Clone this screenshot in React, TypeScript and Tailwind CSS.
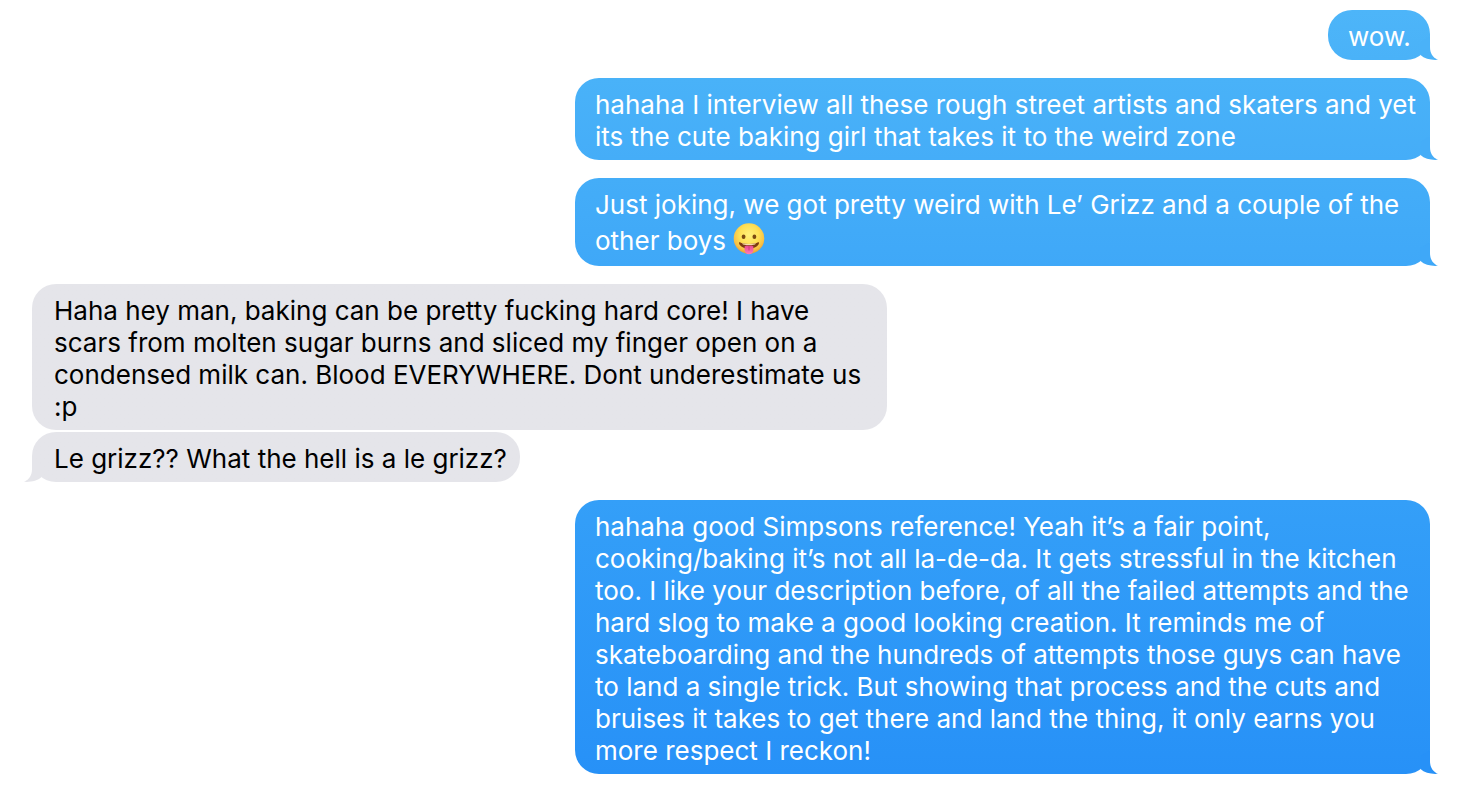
import type { ReactNode } from "react";
import clsx from "clsx";

type Message = {
  id: number;
  sent: boolean;
  body: ReactNode;
  color: string;
  tail?: string;
  spacing: string;
};

function TongueEmoji() {
  return (
    <svg
      role="img"
      aria-label="face with tongue"
      viewBox="0 0 32 38"
      className="inline-block h-[38px] w-8 align-[-9px]"
    >
      <defs>
        <radialGradient id="face" cx="0.5" cy="0.38" r="0.64">
          <stop offset="0" stopColor="#fff07a" />
          <stop offset="0.5" stopColor="#fee055" />
          <stop offset="0.8" stopColor="#f9c044" />
          <stop offset="1" stopColor="#e8952e" />
        </radialGradient>
        <linearGradient id="tongue" x1="0" y1="0" x2="0" y2="1">
          <stop offset="0" stopColor="#e8488c" />
          <stop offset="1" stopColor="#ff7dbb" />
        </linearGradient>
      </defs>
      <circle cx="16" cy="17.5" r="15.3" fill="url(#face)" />
      <ellipse cx="10.6" cy="15.8" rx="1.9" ry="2.3" fill="#7a4a12" />
      <ellipse cx="21.4" cy="15.8" rx="1.9" ry="2.3" fill="#7a4a12" />
      <path
        d="M6 21.6 C6.6 20.8 7.6 21.6 8.4 21.9 C13.2 23.2 18.8 23.2 23.6 21.9 C24.4 21.6 25.4 20.8 26 21.6 C26.2 24.6 21.8 27.8 16 27.8 C10.2 27.8 5.8 24.6 6 21.6 Z"
        fill="#7c3b10"
      />
      <path
        d="M9 22.3 C13.2 23.3 18.8 23.3 23 22.3 L22 23.6 C18.4 24.6 13.6 24.6 10 23.6 Z"
        fill="#f7dcae"
      />
      <path
        d="M11.6 25.4 C12.9 24.1 14.7 24.3 16 25 C17.3 24.3 19.1 24.1 20.4 25.4 V29 C20.4 31.6 18.5 33.2 16 33.2 C13.5 33.2 11.6 31.6 11.6 29 Z"
        fill="url(#tongue)"
      />
      <path d="M16 25.6 V29" stroke="#cf2f74" strokeWidth="0.8" strokeLinecap="round" />
    </svg>
  );
}

function Tail({ sent, color }: { sent: boolean; color: string }) {
  return (
    <svg
      aria-hidden="true"
      viewBox="0 0 32 24"
      className={clsx(
        "absolute bottom-0 h-6 w-8",
        sent ? "-right-2" : "-left-2 -scale-x-100",
        color,
      )}
    >
      <path
        d="M14.5 6 L24 0 V11 C24 17 26.5 21.6 32 23.8 C25.5 24.4 18.5 22.8 14.5 19 Z"
        fill="currentColor"
      />
    </svg>
  );
}

const messages: Message[] = [
  {
    id: 1,
    sent: true,
    body: "wow.",
    color: "from-[#4db5f9] to-[#4ab2f8]",
    tail: "text-[#4ab2f8]",
    spacing: "",
  },
  {
    id: 2,
    sent: true,
    body: "hahaha I interview all these rough street artists and skaters and yet its the cute baking girl that takes it to the weird zone",
    color: "from-[#49b2f8] to-[#45adf8]",
    tail: "text-[#45adf8]",
    spacing: "mt-[18px]",
  },
  {
    id: 3,
    sent: true,
    body: (
      <>
        Just joking, we got pretty weird with Le’ Grizz and a couple of the
        other boys <TongueEmoji />
      </>
    ),
    color: "from-[#44adf8] to-[#3fa8f8]",
    tail: "text-[#3fa8f8]",
    spacing: "mt-[18px]",
  },
  {
    id: 4,
    sent: false,
    body: "Haha hey man, baking can be pretty fucking hard core! I have scars from molten sugar burns and sliced my finger open on a condensed milk can. Blood EVERYWHERE. Dont underestimate us :p",
    color: "from-[#e5e5ea] to-[#e5e5ea]",
    spacing: "mt-[18px]",
  },
  {
    id: 5,
    sent: false,
    body: "Le grizz?? What the hell is a le grizz?",
    color: "from-[#e5e5ea] to-[#e5e5ea]",
    tail: "text-[#e5e5ea]",
    spacing: "mt-0.5",
  },
  {
    id: 6,
    sent: true,
    body: "hahaha good Simpsons reference! Yeah it’s a fair point, cooking/baking it’s not all la-de-da. It gets stressful in the kitchen too. I like your description before, of all the failed attempts and the hard slog to make a good looking creation. It reminds me of skateboarding and the hundreds of attempts those guys can have to land a single trick. But showing that process and the cuts and bruises it takes to get there and land the thing, it only earns you more respect I reckon!",
    color: "from-[#349ff8] to-[#2791f7]",
    tail: "text-[#2791f7]",
    spacing: "mt-[18px]",
  },
];

export default function App() {
  return (
    <main className="min-h-screen bg-white pt-2.5 pr-7 pb-4 pl-8 font-['Inter','Liberation_Sans',sans-serif] text-[26px] leading-8">
      <ol className="flex flex-col">
        {messages.map(({ id, sent, body, color, tail, spacing }) => (
          <li
            key={id}
            className={clsx(
              "relative max-w-[855px] min-w-[102px] rounded-3xl bg-linear-to-b pt-[11px] pr-[13px] pb-[7px]",
              sent ? "self-end pl-5 text-white" : "self-start pl-[22px] text-black",
              color,
              spacing,
            )}
          >
            {tail && <Tail sent={sent} color={tail} />}
            <p>{body}</p>
          </li>
        ))}
      </ol>
    </main>
  );
}
